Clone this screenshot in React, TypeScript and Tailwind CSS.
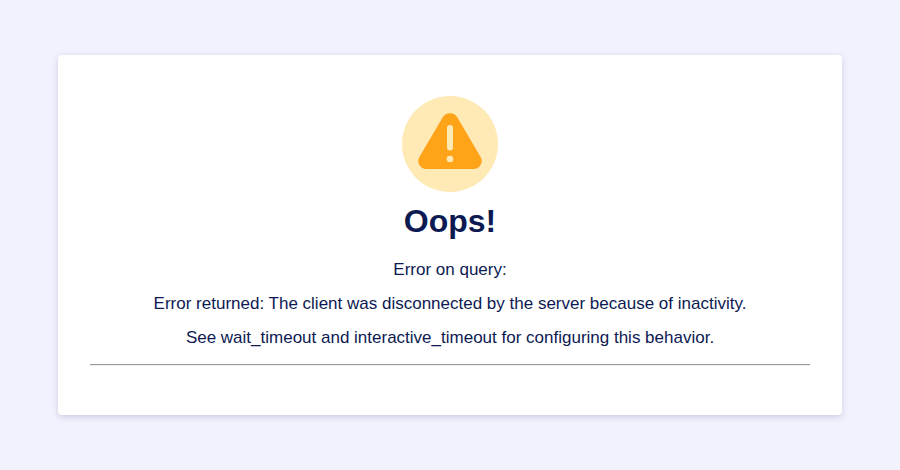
export default function App() {
  return (
    <div className="h-[470px] w-[900px] overflow-hidden bg-[#f2f2fe] px-[58px] pt-[55px] font-['Liberation_Sans',Arial,sans-serif] text-[#0d1a52]">
      <div className="flex h-[360px] flex-col items-center rounded bg-white px-8 pt-[41px] shadow-[0_2px_6px_rgba(50,50,110,0.2)]">
        {/* Warning icon */}
        <div className="flex h-24 w-24 items-center justify-center rounded-full bg-[#ffe9b5]">
          <svg width="64" height="58" viewBox="0 0 64 58" className="mt-[-6px]">
            <path
              d="M24.6 5.600a8.500 8.500 0 0 1 14.800 0L62.600 45A8 8 0 0 1 55.500 57H8.500A8 8 0 0 1 1.400 45z"
              fill="#ffa418"
            />
            <rect x="29" y="13" width="6" height="25.500" rx="3" fill="#ffe9b5" />
            <circle cx="32" cy="47" r="3.300" fill="#ffe9b5" />
          </svg>
        </div>

        <h1 className="mt-[11px] text-[32px] leading-[37px] font-bold">Oops!</h1>

        <p className="mt-[20px] text-[17px] leading-[19px]">Error on query:</p>
        <p className="mt-[15px] text-[17px] leading-[19px]">
          Error returned: The client was disconnected by the server because of inactivity.
        </p>
        <p className="mt-[15px] text-[17px] leading-[19px]">
          See wait_timeout and interactive_timeout for configuring this behavior.
        </p>

        <hr className="mt-[17px] w-full border-t border-b border-t-[#9a9a9a] border-b-[#eeeeee]" />
      </div>
    </div>
  );
}
